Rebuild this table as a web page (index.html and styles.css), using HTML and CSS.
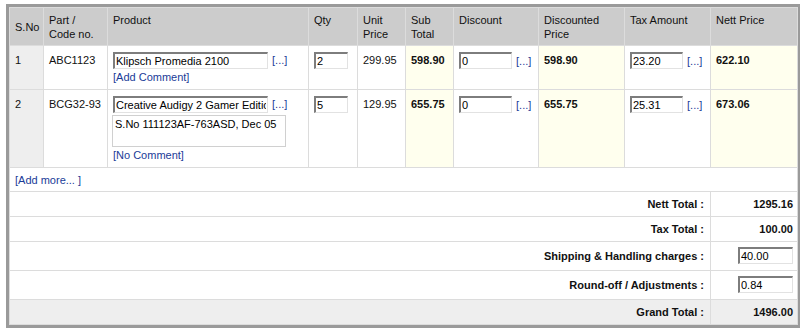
FILE: index.html
```html
<!DOCTYPE html>
<html lang="en">
<head>
    <meta charset="UTF-8">
    <title>Line Items</title>
    <link rel="stylesheet" href="styles.css">
</head>
<body>

<div class="sheet">
    <table class="items">
        <colgroup>
            <col style="width: 34px">
            <col style="width: 64px">
            <col style="width: 201px">
            <col style="width: 49px">
            <col style="width: 48px">
            <col style="width: 48px">
            <col style="width: 85px">
            <col style="width: 86px">
            <col style="width: 86px">
            <col style="width: 87px">
        </colgroup>
        <thead>
            <tr>
                <th class="sno">S.No</th>
                <th>Part /<br>Code no.</th>
                <th>Product</th>
                <th>Qty</th>
                <th>Unit<br>Price</th>
                <th>Sub<br>Total</th>
                <th>Discount</th>
                <th>Discounted<br>Price</th>
                <th>Tax Amount</th>
                <th>Nett Price</th>
            </tr>
        </thead>
        <tbody>
            <!-- linha 1 -->
            <tr class="item">
                <td class="sno">1</td>
                <td>ABC1123</td>
                <td>
                    <div class="product-line"><input type="text" class="field name" value="Klipsch Promedia 2100"> <a href="#" class="more">[...]</a></div>
                    <a href="#" class="link">[Add Comment]</a>
                </td>
                <td><input type="text" class="field qty" value="2"></td>
                <td>299.95</td>
                <td class="calc">598.90</td>
                <td><input type="text" class="field amt" value="0"> <a href="#" class="more">[...]</a></td>
                <td class="calc">598.90</td>
                <td><input type="text" class="field amt" value="23.20"> <a href="#" class="more">[...]</a></td>
                <td class="calc">622.10</td>
            </tr>
            <!-- linha 2 -->
            <tr class="item">
                <td class="sno">2</td>
                <td>BCG32-93</td>
                <td>
                    <div class="product-line"><input type="text" class="field name" value="Creative Audigy 2 Gamer Edition"> <a href="#" class="more">[...]</a></div>
                    <textarea class="comment">S.No 111123AF-763ASD, Dec 05</textarea>
                    <a href="#" class="link">[No Comment]</a>
                </td>
                <td><input type="text" class="field qty" value="5"></td>
                <td>129.95</td>
                <td class="calc">655.75</td>
                <td><input type="text" class="field amt" value="0"> <a href="#" class="more">[...]</a></td>
                <td class="calc">655.75</td>
                <td><input type="text" class="field amt" value="25.31"> <a href="#" class="more">[...]</a></td>
                <td class="calc">673.06</td>
            </tr>
            <tr>
                <td colspan="10" class="add-row"><a href="#" class="link">[Add more... ]</a></td>
            </tr>

            <!-- totais -->
            <tr class="total">
                <td colspan="9" class="label">Nett Total :</td>
                <td class="value">1295.16</td>
            </tr>
            <tr class="total">
                <td colspan="9" class="label">Tax Total :</td>
                <td class="value">100.00</td>
            </tr>
            <tr class="total editable">
                <td colspan="9" class="label">Shipping &amp; Handling charges :</td>
                <td class="value"><input type="text" class="field sum" value="40.00"></td>
            </tr>
            <tr class="total editable">
                <td colspan="9" class="label">Round-off / Adjustments :</td>
                <td class="value"><input type="text" class="field sum" value="0.84"></td>
            </tr>
            <tr class="total grand">
                <td colspan="9" class="label">Grand Total :</td>
                <td class="value">1496.00</td>
            </tr>
        </tbody>
    </table>
</div>

</body>
</html>
```

FILE: styles.css
```css
body {
    font-family: 'Liberation Sans', Arial, sans-serif;
    font-size: 11px;
    color: #111;
    background-color: #fff;
    margin: 4px 0 0 6px;
}
.sheet {
    width: 788px;
    border: 3px solid #9a9a9a;
}
.items {
    width: 788px;
    table-layout: fixed;
    border-collapse: collapse;
}
.items th,
.items td {
    border: 1px solid #dcdcdc;
    padding: 6px 5px;
    line-height: 14px;
    text-align: left;
}
.items th {
    background-color: #cccccc;
    font-weight: normal;
    vertical-align: top;
    padding: 5px 5px 4px;
}
.items th.sno {
    vertical-align: middle;
}
.item td {
    vertical-align: top;
    padding: 7px 5px 5px;
}
.item td.sno {
    background-color: #eeeeee;
}
.item td.calc {
    background-color: #ffffee;
    font-weight: bold;
}
a {
    color: #1a3b98;
    text-decoration: none;
}
.product-line {
    height: 18px;
    margin-top: -1px;
    white-space: nowrap;
}
.field {
    box-sizing: border-box;
    height: 17px;
    margin: 0;
    padding: 0 1px;
    font-family: 'Liberation Sans', Arial, sans-serif;
    font-size: 11px;
    color: #000;
    background-color: #fff;
    border-style: solid;
    border-width: 2px 1px 1px 2px;
    border-color: #7d7d7d #e2e2e2 #e2e2e2 #7d7d7d;
    vertical-align: top;
}
.item td > .field {
    margin-top: -1px;
}
.field.name { width: 155px; }
.field.qty { width: 34px; }
.field.amt { width: 53px; }
.field.sum { width: 55px; }
.more {
    display: inline-block;
    margin-left: 1px;
    line-height: 17px;
    vertical-align: top;
}
.comment {
    display: block;
    box-sizing: border-box;
    width: 174px;
    height: 32px;
    margin: 1px 0 1px -1px;
    padding: 1px 2px;
    font-family: 'Liberation Sans', Arial, sans-serif;
    font-size: 11px;
    line-height: 14px;
    border: 1px solid #d0d0d0;
    resize: none;
    overflow: hidden;
}
.add-row {
    padding: 5px 5px 4px !important;
}
.total td {
    vertical-align: middle;
    padding: 5px 6px 5px 5px;
    font-weight: bold;
    text-align: right;
}
.total td.value {
    padding-right: 4px;
}
.total.editable td {
    padding-top: 5px;
    padding-bottom: 6px;
}
.total.editable .field {
    font-weight: normal;
}
.total.grand td {
    background-color: #eeeeee;
    font-size: 11px;
}
```
